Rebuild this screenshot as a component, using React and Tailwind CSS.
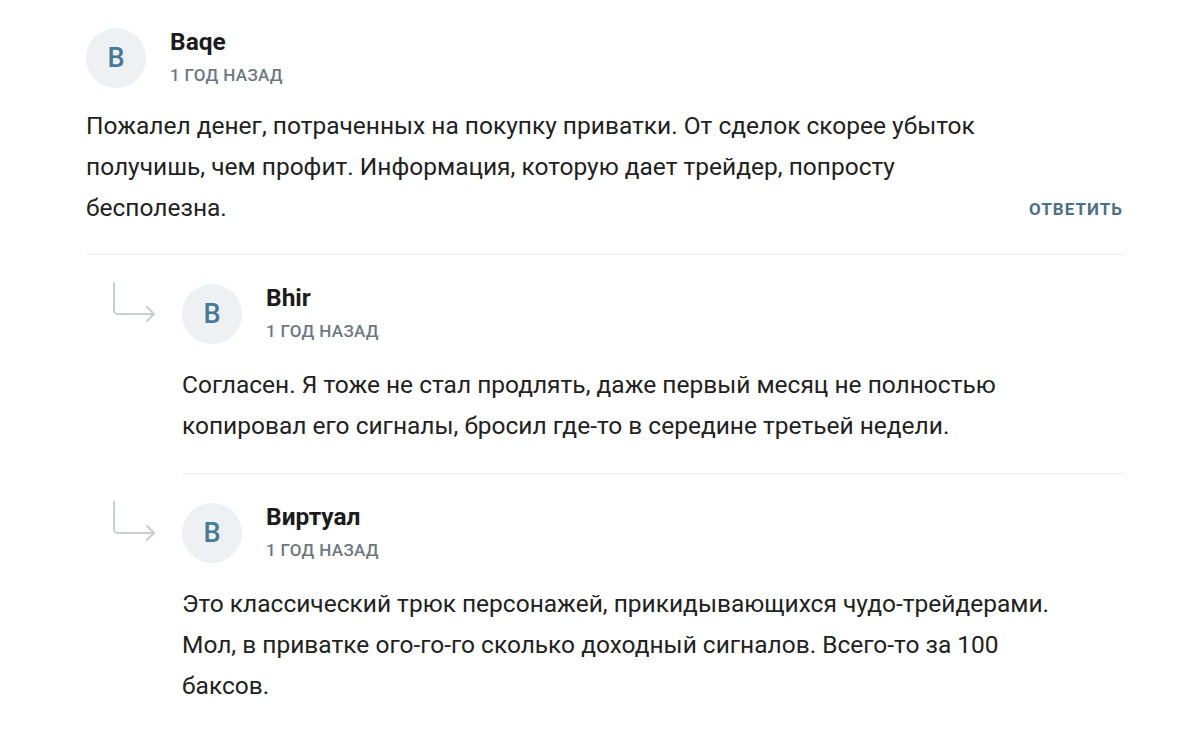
import React from 'react';

const comments = [
  {
    name: 'Baqe',
    time: '1 год назад',
    text: 'Пожалел денег, потраченных на покупку приватки. От сделок скорее убыток получишь, чем профит. Информация, которую дает трейдер, попросту бесполезна.',
    replies: [
      {
        name: 'Bhir',
        time: '1 год назад',
        text: 'Согласен. Я тоже не стал продлять, даже первый месяц не полностью копировал его сигналы, бросил где-то в середине третьей недели.',
      },
      {
        name: 'Виртуал',
        time: '1 год назад',
        text: 'Это классический трюк персонажей, прикидывающихся чудо-трейдерами. Мол, в приватке ого-го-го сколько доходный сигналов. Всего-то за 100 баксов.',
      },
    ],
  },
];

function ReplyArrow() {
  return (
    <svg width="48" height="44" viewBox="0 0 48 44" fill="none" className="flex-shrink-0">
      <path d="M4 2v27a4 4 0 0 0 4 4h36" stroke="#c9ced2" strokeWidth="2" strokeLinecap="round" />
      <path d="M37 26l7 7-7 7" stroke="#c9ced2" strokeWidth="2" strokeLinecap="round" strokeLinejoin="round" />
    </svg>
  );
}

function Header({ name, time }) {
  return (
    <div className="flex items-center gap-6">
      <div className="w-[60px] h-[60px] rounded-full bg-[#edf1f4] flex items-center justify-center text-[27px] text-[#467a96] font-medium">
        B
      </div>
      <div className="flex flex-col">
        <span className="text-[24.5px] font-bold text-[#1c1c1c] leading-[32px]">{name}</span>
        <span className="mt-[2px] text-[17px] font-medium uppercase tracking-[0.02em] text-[#6c7880] leading-[30px]">{time}</span>
      </div>
    </div>
  );
}

export default function App() {
  return (
    <div className="bg-white min-h-screen w-full pl-[86px] pr-[64px] pt-[26px]" style={{ fontFamily: 'Roboto, "Noto Sans", sans-serif' }}>
      {comments.map((c, i) => (
        <div key={i}>
          <div className="pb-[26px] border-b border-[#ececec]">
            <Header name={c.name} time={c.time} />
            <div className="flex items-end justify-between mt-[15px]">
              <p className="max-w-[940px] text-[24.5px] leading-[41px] text-[#222]">{c.text}</p>
              <button className="text-[17px] font-bold uppercase tracking-[0.06em] text-[#4b7087] mb-[6px] mr-[2px]">
                Ответить
              </button>
            </div>
          </div>
          {c.replies.map((r, j) => (
            <div key={j} className="flex">
              <div className="w-[96px] pl-[24px] pt-[26px] flex-shrink-0">
                <ReplyArrow />
              </div>
              <div className={`flex-1 pt-[27px] pb-[27px] ${j < c.replies.length - 1 ? 'border-b border-[#ececec]' : ''}`}>
                <Header name={r.name} time={r.time} />
                <p className="mt-[18px] max-w-[880px] text-[24.5px] leading-[41px] text-[#222]">{r.text}</p>
              </div>
            </div>
          ))}
        </div>
      ))}
    </div>
  );
}
